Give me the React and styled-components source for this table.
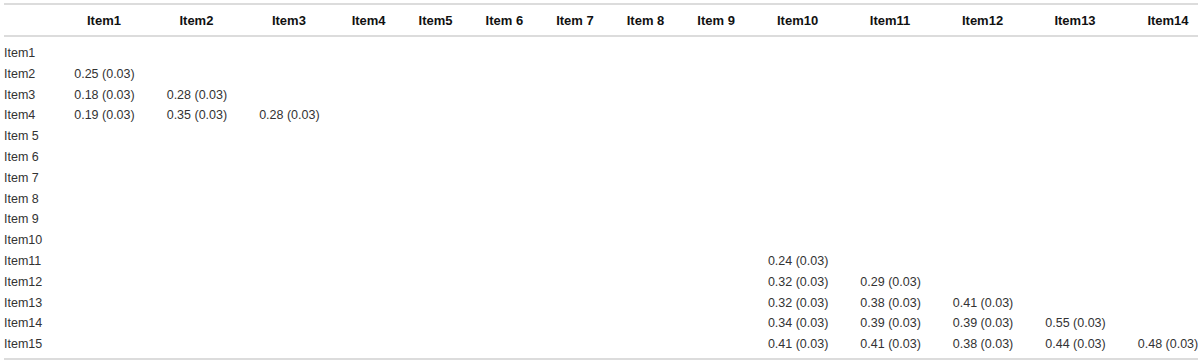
import styled, { createGlobalStyle } from "styled-components";

const GlobalStyle = createGlobalStyle`
    body {
        margin: 0;
        background: #ffffff;
        font-family: "Liberation Sans", Arial, sans-serif;
    }
`;

const Page = styled.div`
    padding: 3px 4px 0 4px;
`;

const Table = styled.table`
    border-collapse: collapse;
    border-top: 2px solid #dcdcdc;
    border-bottom: 2px solid #dcdcdc;
    font-size: 12.5px;
    color: #333;
`;

const HeadCell = styled.th`
    height: 30px;
    padding: 0 33px 0 0;
    text-align: center;
    font-size: 13px;
    font-weight: bold;
    color: #111;
    white-space: nowrap;
    border-bottom: 2px solid #dcdcdc;

    &:last-child {
        padding-right: 0;
    }
`;

const Row = styled.tr`
    height: 20.8px;

    &:first-child td {
        padding-top: 6px;
    }

    &:last-child td {
        padding-bottom: 3px;
    }
`;

const Cell = styled.td`
    padding: 0 32px 0 0;
    text-align: left;
    white-space: nowrap;
    vertical-align: middle;
    line-height: 20.8px;

    &:last-child {
        padding-right: 0;
    }
`;

const columns = [
    "Item1", "Item2", "Item3", "Item4", "Item5", "Item 6", "Item 7",
    "Item 8", "Item 9", "Item10", "Item11", "Item12", "Item13", "Item14",
];

const rows = [
    { label: "Item1", values: {} },
    { label: "Item2", values: { 0: "0.25 (0.03)" } },
    { label: "Item3", values: { 0: "0.18 (0.03)", 1: "0.28 (0.03)" } },
    { label: "Item4", values: { 0: "0.19 (0.03)", 1: "0.35 (0.03)", 2: "0.28 (0.03)" } },
    { label: "Item 5", values: {} },
    { label: "Item 6", values: {} },
    { label: "Item 7", values: {} },
    { label: "Item 8", values: {} },
    { label: "Item 9", values: {} },
    { label: "Item10", values: {} },
    { label: "Item11", values: { 9: "0.24 (0.03)" } },
    { label: "Item12", values: { 9: "0.32 (0.03)", 10: "0.29 (0.03)" } },
    { label: "Item13", values: { 9: "0.32 (0.03)", 10: "0.38 (0.03)", 11: "0.41 (0.03)" } },
    { label: "Item14", values: { 9: "0.34 (0.03)", 10: "0.39 (0.03)", 11: "0.39 (0.03)", 12: "0.55 (0.03)" } },
    { label: "Item15", values: { 9: "0.41 (0.03)", 10: "0.41 (0.03)", 11: "0.38 (0.03)", 12: "0.44 (0.03)", 13: "0.48 (0.03)" } },
];

function App() {
    return (
        <>
            <GlobalStyle />
            <Page>
                <Table>
                    <thead>
                        <tr>
                            <HeadCell />
                            {columns.map((c) => (
                                <HeadCell key={c}>{c}</HeadCell>
                            ))}
                        </tr>
                    </thead>
                    <tbody>
                        {rows.map((r) => (
                            <Row key={r.label}>
                                <Cell>{r.label}</Cell>
                                {columns.map((c, i) => (
                                    <Cell key={c}>{r.values[i] || ""}</Cell>
                                ))}
                            </Row>
                        ))}
                    </tbody>
                </Table>
            </Page>
        </>
    );
}

export default App;
